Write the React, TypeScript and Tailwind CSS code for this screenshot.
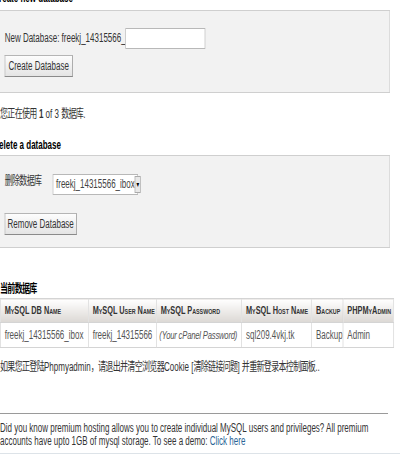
import React from "react";

const font = {
  fontFamily: '"Liberation Sans", "Noto Sans CJK SC", sans-serif',
};

function Btn({ children, w }: { children: React.ReactNode; w: string }) {
  return (
    <button
      className={`${w} h-[22px] whitespace-nowrap border border-[#b5b5b5] border-r-[#8a8a8a] border-b-[#8a8a8a] bg-gradient-to-b from-[#fdfdfd] to-[#e4e4e4] text-[12px] text-[#333] leading-none`}
    >
      {children}
    </button>
  );
}

// CJK runs are set a little tighter than the latin text
function Cjk({ children }: { children: React.ReactNode }) {
  return <span className="tracking-[-1px]">{children}</span>;
}

const th =
  "border border-[#d4d4d4] bg-gradient-to-b from-white to-[#dcd8d4] px-[6px] text-left text-[11px] font-bold text-[#333] [font-variant:small-caps] whitespace-nowrap overflow-hidden";
const td = "border border-[#d4d4d4] px-[6px] text-[#555] whitespace-nowrap overflow-hidden";

export default function App() {
  return (
    <div className="w-[400px] h-[469px] overflow-hidden bg-white" style={font}>
      {/* the source page is rendered horizontally condensed */}
      <div className="w-[600px] origin-top-left scale-x-[0.6667] text-[12px] text-[#333] leading-[13px] whitespace-nowrap">
        {/* create */}
        <h3 className="-mt-[8px] -ml-[10px] h-[18px] font-bold text-black">Create new database</h3>
        <div className="-ml-[6px] w-[591px] h-[83px] border border-[#cfcfcf] bg-[#f2f2f2] pt-[17px] pl-[12px]">
          <div className="flex items-center h-[21px]">
            <span>New Database: freekj_14315566_</span>
            <input className="w-[120px] h-[21px] border border-[#b8b8b8] bg-white outline-none" />
          </div>
          <div className="mt-[6px]">
            <Btn w="w-[102px]">Create Database</Btn>
          </div>
        </div>

        <p className="mt-[15px] h-[13px]">
          <Cjk>您正在使用</Cjk> <b>1</b> of 3 <Cjk>数据库</Cjk>.
        </p>

        {/* delete */}
        <h3 className="mt-[18px] -ml-[10px] h-[16px] font-bold text-black">Delete a database</h3>
        <div className="-ml-[6px] w-[591px] h-[93px] border border-[#cfcfcf] bg-[#f2f2f2] pt-[18px] pl-[12px]">
          <div className="flex items-center h-[21px]">
            <span className="w-[72px] -mt-[6px] tracking-[-1px]">删除数据库</span>
            <div className="flex items-center w-[128px] h-[21px] border border-[#b8b8b8] bg-white">
              <span className="flex-1 pl-[4px] text-[#444]">freekj_14315566_ibox</span>
              <span className="w-[18px] h-[17px] mr-[1px] border border-[#aaa] bg-[#e8e8e8] flex items-center justify-center text-[7px] text-black">▼</span>
            </div>
          </div>
          <div className="mt-[18px]">
            <Btn w="w-[108px]">Remove Database</Btn>
          </div>
        </div>

        {/* current */}
        <h3 className="mt-[35px] h-[13px] font-bold text-black tracking-[-1px]">当前数据库</h3>
        <table className="mt-[2px] w-[590px] table-fixed border-collapse text-[12px]">
          <thead>
            <tr className="h-[24px]">
              <th className={`${th} w-[132px]`}>MySQL DB Name</th>
              <th className={`${th} w-[102px]`}>MySQL User Name</th>
              <th className={`${th} w-[128px]`}>MySQL Password</th>
              <th className={`${th} w-[105px]`}>MySQL Host Name</th>
              <th className={`${th} w-[47px]`}>Backup</th>
              <th className={`${th} w-[76px]`}>PHPMyAdmin</th>
            </tr>
          </thead>
          <tbody>
            <tr className="h-[25px]">
              <td className={td}>freekj_14315566_ibox</td>
              <td className={td}>freekj_14315566</td>
              <td className={`${td} italic !px-[4px] text-[11.5px] tracking-[-0.3px]`}>(Your cPanel Password)</td>
              <td className={td}>sql209.4vkj.tk</td>
              <td className={`${td} text-[#3d6a93]`}>Backup</td>
              <td className={`${td} text-[#3d6a93]`}>Admin</td>
            </tr>
          </tbody>
        </table>

        <p className="mt-[13px] h-[13px]">
          <Cjk>如果您正登陆</Cjk>Phpmyadmin<Cjk>，请退出并清空浏览器</Cjk>Cookie [<Cjk>清除链接问题</Cjk>] <Cjk>并重新登录本控制面板</Cjk>..
        </p>

        <hr className="mt-[39px] w-[582px] border-t border-[#9a9a9a]" />
        <div className="pt-[8px] pb-[5px] border-b border-[#dde3e8]">
          <p>Did you know premium hosting allows you to create individual MySQL users and privileges? All premium</p>
          <p>
            accounts have upto 1GB of mysql storage. To see a demo: <a className="text-[#2a6496]">Click here</a>
          </p>
        </div>
      </div>
    </div>
  );
}
